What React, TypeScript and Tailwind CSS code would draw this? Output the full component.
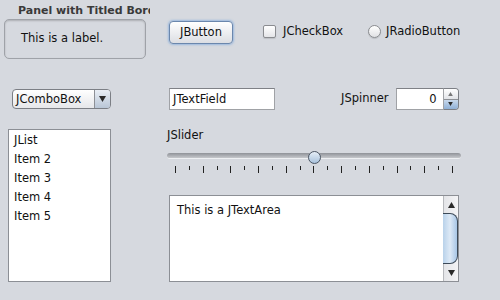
import React from 'react';

const Tri = ({ down = false, className = '' }: { down?: boolean; className?: string }) => (
  <svg width="7" height="6" viewBox="0 0 7 6" className={className}>
    {down ? <polygon points="0,0 7,0 3.5,6" fill="#2a2a2a" /> : <polygon points="3.5,0 7,6 0,6" fill="#2a2a2a" />}
  </svg>
);

const ticks = Array.from({ length: 21 }, (_, i) => i);
const listItems = ['JList', 'Item 2', 'Item 3', 'Item 4', 'Item 5'];

const App = () => {
  return (
    <div className="w-[500px] h-[300px] overflow-hidden bg-[#d6d9df] font-['DejaVu_Sans',sans-serif] text-[11.5px] text-[#111]">
      {/* top row */}
      <div className="flex h-[62px]">
        {/* titled panel */}
        <div className="ml-[4px] w-[146px] pt-[3px]">
          <div className="pl-[14px] h-[16px] leading-[16px] text-[11px] font-bold text-[#3a3a3a] whitespace-nowrap overflow-hidden">
            Panel with Titled Border
          </div>
          <div className="w-[142px] h-[40px] border border-[#9fa2a8] rounded-[5px] shadow-[inset_0_1px_2px_rgba(0,0,0,0.2)] flex items-center pl-[16px]">
            This is a label.
          </div>
        </div>

        {/* button */}
        <div className="ml-[19px] mt-[21px] w-[64px] h-[23px] rounded-[4px] border border-[#6b87ad] bg-gradient-to-b from-[#ffffff] to-[#dcdee3] shadow-[0_0_2px_1px_rgba(110,160,220,0.55)] flex items-center justify-center">
          JButton
        </div>

        {/* checkbox */}
        <div className="ml-[30px] mt-[25px] w-[105px] h-[13px] flex items-center gap-[7px]">
          <div className="w-[13px] h-[13px] rounded-[2px] border border-[#8a8c90] bg-gradient-to-b from-[#ffffff] to-[#e4e5e8] shadow-[0_1px_1px_rgba(0,0,0,0.12)]" />
          <span>JCheckBox</span>
        </div>

        {/* radio */}
        <div className="mt-[25px] h-[13px] flex items-center gap-[5px]">
          <div className="w-[13px] h-[13px] rounded-full border border-[#8a8c90] bg-gradient-to-b from-[#ffffff] to-[#e0e1e4] shadow-[0_1px_1px_rgba(0,0,0,0.12)]" />
          <span>JRadioButton</span>
        </div>
      </div>

      {/* second row */}
      <div className="flex items-center h-[22px] mt-[26px]">
        {/* combo box */}
        <div className="ml-[12px] w-[99px] h-[20px] rounded-[4px] border border-[#7c7f85] bg-gradient-to-b from-[#ffffff] to-[#e6e7ea] flex overflow-hidden">
          <div className="flex-1 pl-[3px] leading-[18px]">JComboBox</div>
          <div className="w-[16px] border-l border-[#8d9096] bg-gradient-to-b from-[#e9eef5] to-[#b9c6d6] flex items-center justify-center">
            <Tri down />
          </div>
        </div>

        {/* text field */}
        <div className="ml-[58px] w-[106px] h-[22px] bg-white border border-[#a0a2a6] border-t-[#7f8186] pl-[3px] leading-[20px]">
          JTextField
        </div>

        {/* spinner */}
        <span className="ml-[66px]">JSpinner</span>
        <div className="ml-[7px] flex h-[22px]">
          <div className="w-[48px] bg-white border border-[#a0a2a6] border-t-[#7f8186] text-right pr-[6px] leading-[20px]">0</div>
          <div className="w-[15px] border border-l-0 border-[#7c7f85] rounded-r-[4px] overflow-hidden flex flex-col">
            <div className="flex-1 bg-gradient-to-b from-[#ffffff] to-[#e2e4e8] flex items-center justify-center">
              <Tri className="w-[5px] h-[4px] opacity-60" />
            </div>
            <div className="flex-1 border-t border-[#8d9096] bg-gradient-to-b from-[#c9d9ec] to-[#8fb0d6] flex items-center justify-center">
              <Tri down className="w-[5px] h-[4px]" />
            </div>
          </div>
        </div>
      </div>

      {/* third row */}
      <div className="flex mt-[19px]">
        {/* list */}
        <div className="ml-[8px] w-[103px] h-[153px] bg-white border border-[#8c8f95] pt-[2px] pl-[5px]">
          {listItems.map((item) => (
            <div key={item} className="h-[19px] leading-[16px]">
              {item}
            </div>
          ))}
        </div>

        {/* right column */}
        <div className="ml-[56px] w-[294px]">
          <div className="h-[12px] leading-[12px]">JSlider</div>

          {/* slider */}
          <div className="relative mt-[8px] h-[26px]">
            <div className="absolute left-0 right-0 top-[4px] h-[6px] rounded-[3px] bg-gradient-to-b from-[#8f9298] to-[#c6c8cc] border-b border-[#eef0f3]" />
            <div className="absolute left-[141px] top-[2px] w-[13px] h-[13px] rounded-full border border-[#4a5564] bg-gradient-to-b from-[#e6eef7] to-[#a9c2dc]" />
            <div className="absolute left-0 right-0 top-[17px] px-[8px] flex justify-between items-start">
              {ticks.map((t) => (
                <div key={t} className={t % 2 === 0 ? 'w-[1px] h-[7px] bg-[#222]' : 'w-[1px] h-[4px] bg-[#222]'} />
              ))}
            </div>
          </div>

          {/* text area */}
          <div className="ml-[2px] mt-[20px] w-[290px] h-[87px] border border-[#8c8f95] bg-white flex">
            <div className="flex-1 pl-[7px] pt-[7px] leading-[14px]">This is a JTextArea</div>
            <div className="w-[15px] border-l border-[#b7b9bd] bg-gradient-to-r from-[#e4e5e8] to-[#f4f4f6] flex flex-col">
              <div className="h-[17px] flex items-center justify-center">
                <Tri />
              </div>
              <div className="h-[51px] -ml-[1px] rounded-r-[8px] border border-l-0 border-[#3d4a58] bg-gradient-to-r from-[#b9d2ea] via-[#dde9f6] to-[#a8c6e6]" />
              <div className="flex-1 flex items-center justify-center">
                <Tri down />
              </div>
            </div>
          </div>
        </div>
      </div>
    </div>
  );
};

export default App;
